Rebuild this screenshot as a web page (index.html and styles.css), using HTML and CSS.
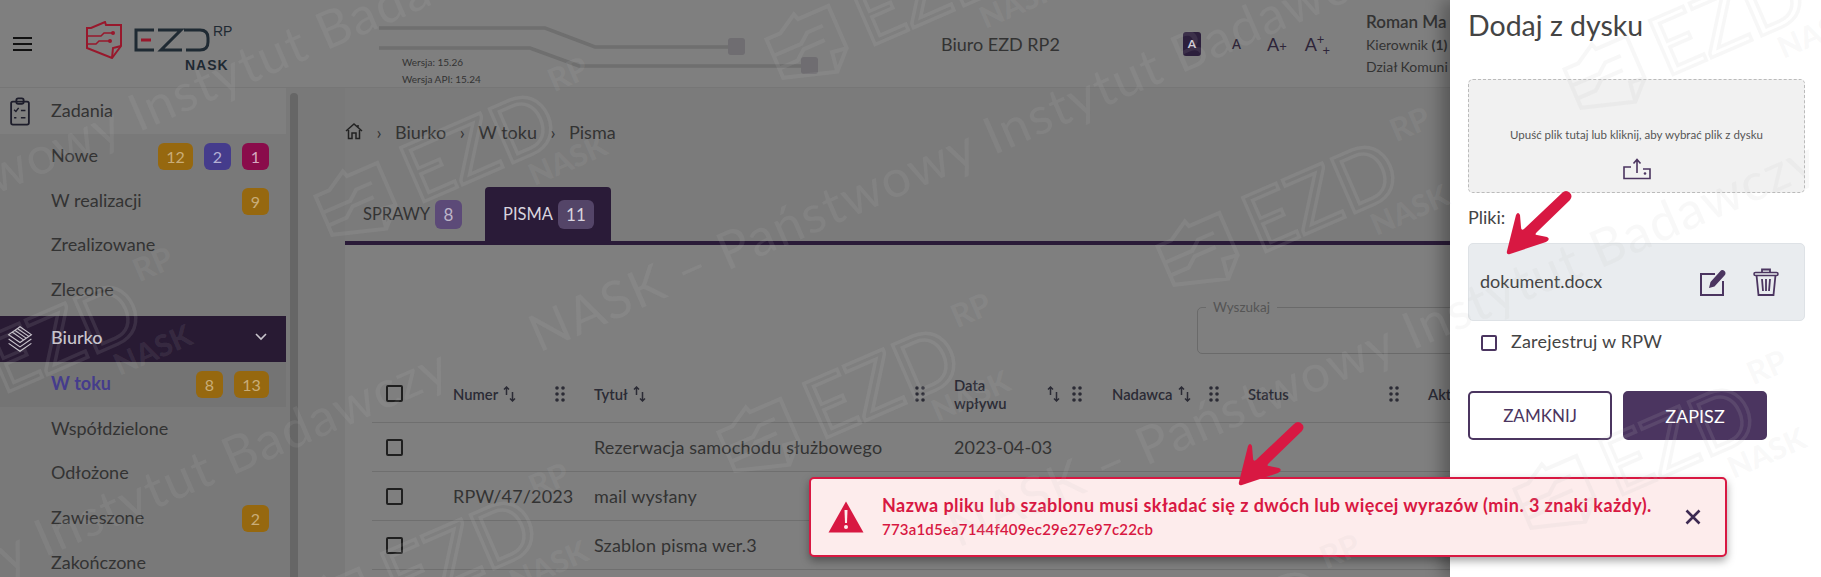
FILE: index.html
```html
<!DOCTYPE html>
<html lang="pl">

<head>
  <title>Biuro EZD RP</title>
  <meta charset="utf-8">
  <link rel="stylesheet" href="styles.css">
</head>

<body>
  <div class="app">
    <header class="top">
      <div class="hamburger"><span></span><span></span><span></span></div>
      <div class="logo">
        <svg class="logo__icon" viewBox="0 0 36 38" width="36" height="38">
          <path d="M1 7 L5 7 L19 1 L20 4 L35 4 L35 25 L26 37 L1 27 Z" fill="none" stroke="#98182c" stroke-width="2" />
          <path d="M26 37 L27 27 L35 25" fill="none" stroke="#98182c" stroke-width="2" />
          <path d="M2 15 L15 15 L18 12 L27 12 M2 23 L10 23 L13 20 L24 20" fill="none" stroke="#98182c" stroke-width="1.5" />
          <circle cx="27" cy="12" r="2" fill="#98182c" />
          <circle cx="24" cy="20" r="2" fill="#98182c" />
        </svg>
        <div class="logo__text">
          <div class="logo__name">
            <svg viewBox="0 0 76 24" width="76" height="24">
              <path d="M20 2 H2 V22 H20" fill="none" stroke="#1f2a33" stroke-width="3" />
              <path d="M7 12 H17" fill="none" stroke="#98182c" stroke-width="3" />
              <path d="M24 2 H47 L27 22 H48" fill="none" stroke="#1f2a33" stroke-width="3" />
              <path d="M50 2 H66 Q74 2 74 10 V14 Q74 22 66 22 H52" fill="none" stroke="#1f2a33" stroke-width="3" />
            </svg>
            <span class="logo__rp">RP</span>
          </div>
          <span class="logo__nask">NASK</span>
        </div>
      </div>
      <div class="versions">
        <span>Wersja: 15.26</span>
        <span>Wersja API: 15.24</span>
      </div>
      <div class="office">Biuro EZD RP2</div>
      <div class="fontsizes">
        <span class="fontsizes__item fontsizes__item--active">A</span>
        <span class="fontsizes__item fontsizes__item--a">A</span>
        <span class="fontsizes__item fontsizes__item--b">A<small>+</small></span>
        <span class="fontsizes__item fontsizes__item--c">A<sup>+</sup><sub>+</sub></span>
      </div>
      <div class="user">
        <div class="user__name">Roman Ma</div>
        <div class="user__role">Kierownik <b>(1)</b></div>
        <div class="user__role">Dział Komuni</div>
      </div>
      <svg class="circuit" viewBox="0 0 445 50" width="445" height="50">
        <path d="M0 2 H166 L216 21 H355 M0 22 H151 L200 40 H430" fill="none" stroke="#6f6f6f" stroke-width="3.5" />
        <rect x="349" y="12" width="17" height="17" rx="3" fill="#6f6d71" />
        <rect x="422" y="31" width="17" height="17" rx="3" fill="#6f6d71" />
      </svg>
    </header>

    <div class="body">
      <nav class="side">
        <div class="side__head">
          <svg class="side__icon" viewBox="0 0 22 32" width="20" height="29">
            <rect x="1.2" y="5" width="19.6" height="25.500" rx="2" fill="none" stroke="#1d1d2b" stroke-width="2" />
            <rect x="7" y="1.500" width="8" height="6" rx="2" fill="none" stroke="#1d1d2b" stroke-width="2" />
            <path d="M4.500 14 L6.500 16 L9.500 12 M4.500 23 H7 M12 15 H17 M12 23 H17" fill="none" stroke="#1d1d2b" stroke-width="1.600" />
          </svg>
          <span class="side__title">Zadania</span>
        </div>
        <ul class="side__list">
          <li class="side__row">Nowe
            <span class="badges"><i class="badge badge--orange badge--wide">12</i><i class="badge badge--blue">2</i><i class="badge badge--red">1</i></span>
          </li>
          <li class="side__row">W realizacji
            <span class="badges"><i class="badge badge--orange">9</i></span>
          </li>
          <li class="side__row">Zrealizowane</li>
          <li class="side__row">Zlecone</li>
          <li class="side__row side__row--open">
            <svg class="side__icon side__icon--layers" viewBox="0 0 28 32" width="28" height="28">
              <path d="M14 2 L27 11 L14 20 L1 11 Z M5 8 L18 17 M8 6 L21 15 M11 4 L24 13 M1 16 L14 25 L27 16 M1 21 L14 30 L27 21" fill="none" stroke="#c9c5cd" stroke-width="1.300" />
            </svg>
            <span class="side__grow">Biurko</span>
            <svg viewBox="0 0 12 8" width="12" height="8"><path d="M1 1 L6 6 L11 1" fill="none" stroke="#c9c5cd" stroke-width="1.600" /></svg>
          </li>
          <li class="side__row side__row--current">W toku
            <span class="badges"><i class="badge badge--orange">8</i><i class="badge badge--orange badge--wide">13</i></span>
          </li>
          <li class="side__row">Współdzielone</li>
          <li class="side__row">Odłożone</li>
          <li class="side__row">Zawieszone
            <span class="badges"><i class="badge badge--orange">2</i></span>
          </li>
          <li class="side__row">Zakończone</li>
        </ul>
      </nav>
      <div class="scroll"><div class="scroll__thumb"></div></div>

      <main class="content">
        <div class="crumbs">
          <svg viewBox="0 0 18 18" width="18" height="18"><path d="M1 9 L9 2 L17 9 M3.500 8 V16.500 H7 V11 H11 V16.500 H14.500 V8 M13 3 V5.500" fill="none" stroke="#222" stroke-width="1.500" /></svg>
          <span class="crumbs__sep">›</span><span>Biurko</span>
          <span class="crumbs__sep">›</span><span>W toku</span>
          <span class="crumbs__sep">›</span><span>Pisma</span>
        </div>
        <div class="tabs">
          <div class="tab">SPRAWY <i class="tab__count">8</i></div>
          <div class="tab tab--active">PISMA <i class="tab__count tab__count--wide">11</i></div>
        </div>
        <section class="panel">
          <div class="search"><span class="search__label">Wyszukaj</span></div>
          <div class="grid grid--head">
            <span class="check"></span>
            <span class="cell">Numer <svg class="sort" viewBox="0 0 13 16" width="13" height="16"><use href="#sort" /></svg><svg class="grip grip--numer" viewBox="0 0 10 16" width="10" height="16"><use href="#grip" /></svg></span>
            <span class="cell">Tytuł <svg class="sort" viewBox="0 0 13 16" width="13" height="16"><use href="#sort" /></svg><svg class="grip grip--tytul" viewBox="0 0 10 16" width="10" height="16"><use href="#grip" /></svg></span>
            <span class="cell"><span class="cell__two">Data wpływu</span><svg class="sort" viewBox="0 0 13 16" width="13" height="16"><use href="#sort" /></svg><svg class="grip grip--data" viewBox="0 0 10 16" width="10" height="16"><use href="#grip" /></svg></span>
            <span class="cell">Nadawca <svg class="sort" viewBox="0 0 13 16" width="13" height="16"><use href="#sort" /></svg><svg class="grip grip--nadawca" viewBox="0 0 10 16" width="10" height="16"><use href="#grip" /></svg></span>
            <span class="cell">Status<svg class="grip grip--status" viewBox="0 0 10 16" width="10" height="16"><use href="#grip" /></svg></span>
            <span class="cell">Akt</span>
          </div>
          <div class="grid">
            <span class="check"></span><span></span><span>Rezerwacja samochodu służbowego</span><span>2023-04-03</span>
          </div>
          <div class="grid">
            <span class="check"></span><span>RPW/47/2023</span><span>mail wysłany</span><span></span>
          </div>
          <div class="grid">
            <span class="check"></span><span></span><span>Szablon pisma wer.3</span><span></span>
          </div>
        </section>
      </main>
    </div>
  </div>

  <aside class="drawer">
    <h2 class="drawer__title">Dodaj z dysku</h2>
    <div class="drop">
      <span>Upuść plik tutaj lub kliknij, aby wybrać plik z dysku</span>
      <svg viewBox="0 0 28 22" width="28" height="22">
        <path d="M8 9 H1 V20.500 H27 V11 H20 M14 15 V2 M10.500 5.500 L14 1.500 L17.500 5.500" fill="none" stroke="#4b3560" stroke-width="1.600" />
        <circle cx="22" cy="15.500" r="1.300" fill="#4b3560" />
      </svg>
    </div>
    <div class="files__label">Pliki:</div>
    <div class="file">
      <span class="file__name">dokument.docx</span>
      <svg class="file__edit" viewBox="0 0 26 28" width="26" height="28">
        <path d="M15 6 H1 V27 H23 V13" fill="none" stroke="#4b3560" stroke-width="2" />
        <path d="M9 20 L10.500 14 L20 3.500 Q22 1 24.500 3 Q26.500 5 24.500 7.500 L14.500 18.500 Z" fill="#4b3560" />
      </svg>
      <svg class="file__trash" viewBox="0 0 26 28" width="26" height="28">
        <path d="M9 4.500 V1.500 H17 V4.500 M3.500 7 L5.500 27 H20.500 L22.500 7 M9 11 L10 23 M13 11 V23 M17 11 L16 23" fill="none" stroke="#4b3560" stroke-width="1.800" />
        <rect x="1" y="4.500" width="24" height="3" rx="1.500" fill="none" stroke="#4b3560" stroke-width="1.600" />
      </svg>
    </div>
    <label class="rpw"><span class="rpw__box"></span>Zarejestruj w RPW</label>
    <div class="drawer__actions">
      <button class="btn">ZAMKNIJ</button>
      <button class="btn btn--primary">ZAPISZ</button>
    </div>
  </aside>

  <div class="toast">
    <svg class="toast__icon" viewBox="0 0 36 32" width="36" height="32">
      <path d="M18 0.500 L35.500 31.500 H0.500 Z" fill="#d81842" />
      <path d="M16.500 9 H19.500 L19 22 H17 Z" fill="#fdecec" />
      <circle cx="18" cy="26" r="2" fill="#fdecec" />
    </svg>
    <div class="toast__body">
      <div class="toast__msg">Nazwa pliku lub szablonu musi składać się z dwóch lub więcej wyrazów (min. 3 znaki każdy).</div>
      <div class="toast__id">773a1d5ea7144f409ec29e27e97c22cb</div>
    </div>
    <svg class="toast__close" viewBox="0 0 16 16" width="16" height="16"><path d="M1.500 1.500 L14.500 14.500 M14.500 1.500 L1.500 14.500" stroke="#3d2a52" stroke-width="2.600" /></svg>
  </div>

  <!-- czerwone strzalki z instrukcji -->
  <svg class="arrow arrow--one" viewBox="0 0 66 65" width="66" height="65"><use href="#arrow" /></svg>
  <svg class="arrow arrow--two" viewBox="0 0 66 65" width="66" height="65"><use href="#arrow" /></svg>

  <svg class="watermark" viewBox="0 0 1821 577" width="1821" height="577">
    <g class="watermark__text">
      <text transform="translate(-410 755) rotate(-23.500)">NASK – Państwowy Instytut Badawczy</text>
      <text transform="translate(-316 330) rotate(-23.500)">NASK – Państwowy Instytut Badawczy</text>
      <text transform="translate(539 353) rotate(-23.500)">NASK – Państwowy Instytut Badawczy</text>
      <text transform="translate(958 548) rotate(-23.500)">NASK – Państwowy Instytut Badawczy</text>
    </g>
    <use href="#wm" transform="translate(474 147) rotate(-23.500)" />
    <use href="#wm" transform="translate(1316 197) rotate(-23.500)" />
    <use href="#wm" transform="translate(925 -10) rotate(-23.500)" />
    <use href="#wm" transform="translate(877 383) rotate(-23.500)" />
    <use href="#wm" transform="translate(59 337) rotate(-23.500)" />
    <use href="#wm" transform="translate(455 553) rotate(-23.500)" />
    <use href="#wm" transform="translate(1723 20) rotate(-23.500)" />
    <use href="#wm" transform="translate(1673 440) rotate(-23.500)" />
    <use href="#wm" transform="translate(1246 624) rotate(-23.500)" />
  </svg>

  <svg class="defs" width="0" height="0">
    <defs>
      <g id="sort">
        <path d="M3.500 9 V1 M1 3.500 L3.500 1 L6 3.500 M9.500 6 V15 M7 12.500 L9.500 15 L12 12.500" fill="none" stroke="#2b2b35" stroke-width="1.500" />
      </g>
      <g id="grip" fill="#2b2b35">
        <circle cx="2" cy="2" r="1.800" /><circle cx="8" cy="2" r="1.800" />
        <circle cx="2" cy="8" r="1.800" /><circle cx="8" cy="8" r="1.800" />
        <circle cx="2" cy="14" r="1.800" /><circle cx="8" cy="14" r="1.800" />
      </g>
      <path id="arrow" d="M64 2 Q60 -2 56 2 L18 38 Q15 40 15 36 L14 24 Q12 20 10 24 L1 60 Q0 64 4 63 L40 51 Q45 48 41 46 L31 44 Q28 44 31 41 L64 9 Q67 5 64 2 Z" fill="#d81842" />
      <g id="wm" class="wm">
        <path class="wm__line" d="M-165 -18 L-150 -18 L-130 -30 L-128 -24 L-95 -24 L-95 22 L-113 40 L-165 24 Z M-113 40 L-110 20 L-95 22 M-163 0 L-135 0 L-125 -8 L-108 -8 M-163 14 L-145 14 L-135 6 L-112 6" />
        <text class="wm__ezd" x="-75" y="30">EZD</text>
        <text class="wm__rp" x="95" y="-18">RP</text>
        <text class="wm__nask" x="40" y="60">NASK</text>
      </g>
    </defs>
  </svg>
</body>

</html>
```

FILE: styles.css
```css
* {
  box-sizing: border-box;
}

html, body {
  margin: 0;
  height: 577px;
  overflow: hidden;
}

body {
  position: relative;
  font-family: "Lato", "Open Sans", sans-serif;
  color: #333;
  background: #7f7f7f;
}

i {
  font-style: normal;
}

/* Strona pod spodem, przyciemniona */
.app {
  width: 1821px;
  height: 577px;
  display: flex;
  flex-direction: column;
}

.top {
  position: relative;
  height: 88px;
  flex: none;
  display: flex;
  align-items: center;
  border-bottom: 1px solid #767676;
}

.hamburger {
  margin-left: 13px;
  width: 19px;
  display: flex;
  flex-direction: column;
  gap: 4px;
}

.hamburger span {
  height: 2px;
  background: #111;
}

.logo {
  margin-left: 54px;
  display: flex;
  align-items: flex-start;
  width: 316px;
  height: 46px;
}

.logo__text {
  margin-left: 12px;
  padding-top: 7px;
}

.logo__name {
  display: flex;
}

.logo__rp {
  margin-left: 3px;
  margin-top: -4px;
  font-family: "Liberation Sans", sans-serif;
  font-size: 14px;
  line-height: 14px;
  color: #1f2a33;
}

.logo__nask {
  display: block;
  margin-left: 51px;
  margin-top: 8px;
  font-family: "Liberation Sans", sans-serif;
  font-size: 14px;
  line-height: 10px;
  font-weight: 700;
  letter-spacing: 1px;
  color: #1f2a33;
}

.circuit {
  position: absolute;
  left: 379px;
  top: 26px;
}

.versions {
  align-self: flex-start;
  margin-top: 55px;
  display: flex;
  flex-direction: column;
  gap: 3px;
  width: 539px;
  font-size: 10px;
  line-height: 14px;
}

.office {
  width: 242px;
  font-size: 18px;
}

.fontsizes {
  width: 183px;
  display: flex;
  align-items: center;
  color: #2d2438;
}

.fontsizes__item {
  font-size: 13px;
  font-weight: 600;
}

.fontsizes__item small {
  font-size: 13px;
}

.fontsizes__item sup, .fontsizes__item sub {
  font-size: 13px;
  line-height: 0;
}

.fontsizes__item sub {
  margin-left: -2px;
}

.fontsizes__item--active {
  width: 18px;
  height: 24px;
  border-radius: 3px;
  background: #2c1f3c;
  color: #d0ccd6;
  text-align: center;
  line-height: 24px;
  font-size: 12px;
  font-weight: 700;
}

.fontsizes__item--a {
  margin-left: 31px;
}

.fontsizes__item--b {
  margin-left: 26px;
  font-size: 18px;
  font-weight: 400;
}

.fontsizes__item--c {
  margin-left: 18px;
  font-size: 18px;
  font-weight: 400;
}

.user {
  white-space: nowrap;
}

.user__name {
  font-size: 17px;
  line-height: 24px;
  font-weight: 600;
}

.user__role {
  font-size: 14px;
  line-height: 22px;
}

.body {
  flex: 1;
  display: flex;
  min-height: 0;
}

.side {
  width: 286px;
  flex: none;
  font-size: 18px;
}

.side__head {
  height: 46px;
  padding-left: 10px;
  display: flex;
  align-items: center;
  gap: 21px;
}

.side__title {
  margin-bottom: 2px;
}

.side__list {
  margin: 0;
  padding: 0;
  list-style: none;
  background: #797979;
}

.side__row {
  height: 44.800px;
  padding: 0 17px 3px 51px;
  display: flex;
  align-items: center;
  justify-content: space-between;
}

.side__row--open {
  height: 46px;
  margin-top: 2.800px;
  padding-left: 6px;
  padding-right: 19px;
  background: #281a33;
  color: #c9c5cd;
  font-weight: 500;
  justify-content: flex-start;
}

.side__icon--layers {
  margin-right: 17px;
  margin-top: 3px;
}

.side__grow {
  flex: 1;
}

.side__row--current {
  background: #747474;
  color: #453c8c;
  font-weight: 700;
}

.badges {
  display: flex;
  gap: 11px;
  margin-top: 3px;
}

.badge {
  width: 27px;
  height: 27px;
  border-radius: 6px;
  text-align: center;
  font-size: 16px;
  font-weight: 400;
  line-height: 27px;
}

.badge--wide {
  width: 35px;
}

.badge--orange {
  background: #96680f;
  color: #c9ad78;
}

.badge--blue {
  background: #453c8c;
  color: #b4b0d4;
}

.badge--red {
  background: #8a0c4b;
  color: #d6a9c0;
}

.scroll {
  width: 59px;
  flex: none;
  background: #797979;
  padding: 5px 47px 0 4px;
}

.scroll__thumb {
  width: 8px;
  height: 100%;
  border-radius: 4px 4px 0 0;
  background: #666;
}

.content {
  flex: 1;
  min-width: 0;
  display: flex;
  flex-direction: column;
  background: #7b7b7b;
}

.crumbs {
  height: 99px;
  padding-top: 34px;
  display: flex;
  align-items: flex-start;
  font-size: 18px;
  line-height: 20px;
}

.crumbs__sep {
  width: 16px;
  margin: 0 8px 0 8px;
  text-align: center;
}

.tabs {
  height: 58px;
  flex: none;
  padding-left: 18px;
  display: flex;
  align-items: stretch;
  border-bottom: 4px solid #2a1b38;
  font-size: 16.500px;
}

.tab {
  width: 122px;
  display: flex;
  align-items: center;
  gap: 5px;
}

.tab--active {
  width: 126px;
  padding-left: 18px;
  border-radius: 4px 4px 0 0;
  background: #2a1b38;
  color: #d8d4de;
}

.tab__count {
  width: 27px;
  height: 29px;
  border-radius: 6px;
  background: #5c4a78;
  color: #bdb5c9;
  text-align: center;
  line-height: 29px;
  font-size: 17px;
}

.tab__count--wide {
  width: 36px;
  background: #544568;
  color: #d8d4de;
}

.panel {
  flex: 1;
  padding: 62px 0 0 27px;
  background: #7f7f7f;
}

.search {
  position: relative;
  margin-left: 825px;
  height: 47px;
  width: 400px;
  border: 1px solid #6a6a6a;
  border-radius: 5px;
}

.search__label {
  position: absolute;
  left: 8px;
  top: -10px;
  padding: 0 7px;
  background: #7f7f7f;
  font-size: 13.500px;
  line-height: 18px;
  color: #555;
}

.grid {
  display: grid;
  grid-template-columns: 81px 141px 360px 158px 136px 180px 200px;
  align-items: center;
  height: 49px;
  border-bottom: 1px solid #6f6f6f;
  font-size: 18px;
  letter-spacing: .15px;
}

.grid--head {
  height: 69px;
  padding-top: 11px;
  font-size: 14.800px;
  font-weight: 600;
  letter-spacing: 0;
  color: #2b2b35;
}

.check {
  margin-left: 14px;
  width: 17px;
  height: 17px;
  border: 2px solid #1f1f1f;
  border-radius: 2px;
}

.cell {
  position: relative;
  display: flex;
  align-items: center;
}

.cell__two {
  width: 60px;
  line-height: 18px;
}

.sort {
  margin-left: 5px;
}

.cell .cell__two + .sort {
  margin-left: 33px;
}

.grip {
  position: absolute;
  top: 50%;
  margin-top: -8px;
}

.grip--numer {
  left: 102px;
}

.grip--tytul {
  left: 321px;
}

.grip--data {
  left: 118px;
}

.grip--nadawca {
  left: 97px;
}

.grip--status {
  left: 141px;
}

/* Panel boczny */
.drawer {
  position: absolute;
  top: 0;
  right: 0;
  bottom: 0;
  width: 371px;
  padding: 0 16px 0 18px;
  background: #fff;
  box-shadow: -8px 0 16px rgba(0, 0, 0, .3);
  font-size: 18px;
  color: #444;
}

.drawer__title {
  margin: 0;
  padding-top: 9px;
  height: 79px;
  font-size: 28.500px;
  line-height: 32px;
  font-weight: 400;
}

.drop {
  height: 114px;
  padding-top: 47px;
  display: flex;
  flex-direction: column;
  align-items: center;
  gap: 15px;
  border: 1px dashed #bbb;
  border-radius: 5px;
  background: #f1f1f1;
  font-size: 11.500px;
  line-height: 16px;
  color: #555;
}

.files__label {
  height: 50px;
  padding-top: 13px;
  line-height: 22px;
}

.file {
  height: 78px;
  padding: 0 25px 0 11px;
  display: flex;
  align-items: center;
  border: 1px solid #dee2e6;
  border-radius: 5px;
  background: #e9ecef;
}

.file__name {
  flex: 1;
  margin-top: -3px;
}

.file__trash {
  margin-left: 27px;
}

.rpw {
  height: 70px;
  padding: 9px 0 0 13px;
  display: flex;
  align-items: flex-start;
  gap: 14px;
  line-height: 22px;
  letter-spacing: .2px;
}

.rpw__box {
  width: 16px;
  height: 16px;
  margin-top: 5px;
  border: 2px solid #4b3560;
  border-radius: 2px;
}

.drawer__actions {
  display: flex;
  gap: 11px;
}

.btn {
  width: 144px;
  height: 49px;
  border: 2px solid #4b3560;
  border-radius: 5px;
  background: #fff;
  color: #4b3560;
  font-family: inherit;
  font-size: 17px;
}

.btn--primary {
  background: #4b3560;
  color: #fff;
  font-size: 18px;
}

/* Komunikat o bledzie */
.toast {
  position: absolute;
  left: 809px;
  top: 477px;
  width: 918px;
  height: 80px;
  padding: 0 24px 0 17px;
  display: flex;
  align-items: center;
  border: 2px solid #d81842;
  border-radius: 5px;
  background: #fdecec;
  box-shadow: 0 4px 8px rgba(0, 0, 0, .35);
  color: #d81842;
}

.toast__icon {
  flex: none;
}

.toast__body {
  flex: 1;
  margin-left: 18px;
}

.toast__msg {
  font-size: 18px;
  line-height: 24px;
  font-weight: 700;
  letter-spacing: .43px;
}

.toast__id {
  font-size: 15px;
  line-height: 24px;
  font-weight: 600;
  letter-spacing: .2px;
}

.arrow {
  position: absolute;
}

.arrow--one {
  left: 1506px;
  top: 191px;
}

.arrow--two {
  left: 1238px;
  top: 422px;
}

/* Znak wodny */
.watermark {
  position: absolute;
  left: 0;
  top: 0;
  pointer-events: none;
}

.watermark__text {
  font-size: 52px;
  letter-spacing: 1.500px;
  fill: #bfbfbf;
  fill-opacity: .11;
}

.wm__line {
  fill: none;
  stroke: #bfbfbf;
  stroke-opacity: .12;
  stroke-width: 4;
}

.wm__ezd {
  font-size: 82px;
  fill: none;
  stroke: #bfbfbf;
  stroke-opacity: .13;
  stroke-width: 3.500;
}

.wm__rp {
  font-size: 32px;
  font-weight: 700;
  fill: #bfbfbf;
  fill-opacity: .11;
}

.wm__nask {
  font-size: 30px;
  font-weight: 900;
  fill: #bfbfbf;
  fill-opacity: .11;
}

.defs {
  position: absolute;
}
```
